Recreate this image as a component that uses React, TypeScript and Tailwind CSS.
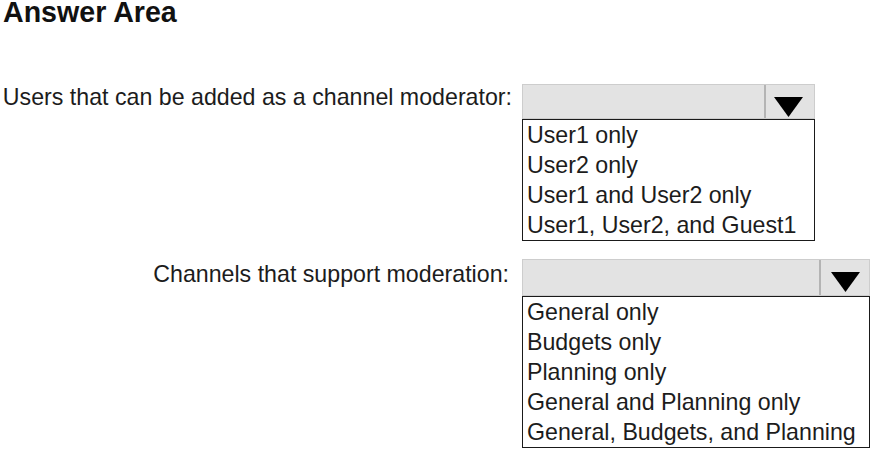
import React from "react";

function Triangle() {
  return (
    <svg width="29" height="20" viewBox="0 0 29 20" className="block">
      <polygon points="0,0 29,0 14.5,20" fill="#000" />
    </svg>
  );
}

function Dropdown({
  width,
  boxH,
  triLeft,
  options,
}: {
  width: string;
  boxH: string;
  triLeft: string;
  options: string[];
}) {
  return (
    <div className={`flex flex-col ${width}`}>
      <div className={`flex ${boxH} bg-[#e3e3e3] border border-[#cdcdcd]`}>
        <div className="flex-1" />
        <div className="w-[2px] bg-[#b4b4b4]" />
        <div className={`flex-1 max-w-[48px] pt-[12px] ${triLeft}`}>
          <Triangle />
        </div>
      </div>
      <div className="border border-[#1a1a1a] bg-white pl-[4px]">
        {options.map((o) => (
          <div key={o} className="leading-[30px] text-[23.2px] text-[#1c1c1c] whitespace-nowrap">
            {o}
          </div>
        ))}
      </div>
    </div>
  );
}

export default function App() {
  return (
    <div
      className="w-[872px] h-[449px] bg-white overflow-hidden"
      style={{ fontFamily: '"Liberation Sans", Arial, sans-serif' }}
    >
      <h1 className="text-[28.6px] font-bold leading-[28px] mt-[-2px] ml-[3px] text-[#111]">Answer Area</h1>
      <div className="grid grid-cols-[512px_auto] gap-x-[10px] mt-[58px]">
        <div className="text-right text-[23.2px] leading-[26px] text-[#1c1c1c] whitespace-nowrap">
          Users that can be added as a channel moderator:
        </div>
        <Dropdown
          width="w-[293px]"
          boxH="h-[35px]"
          triLeft="pl-[8px]"
          options={["User1 only", "User2 only", "User1 and User2 only", "User1, User2, and Guest1"]}
        />
      </div>
      <div className="grid grid-cols-[512px_auto] gap-x-[10px] mt-[18px]">
        <div className="text-right text-[23.2px] leading-[30px] pr-[3px] text-[#1c1c1c] whitespace-nowrap">
          Channels that support moderation:
        </div>
        <Dropdown
          width="w-[348px]"
          boxH="h-[37px]"
          triLeft="pl-[10px]"
          options={[
            "General only",
            "Budgets only",
            "Planning only",
            "General and Planning only",
            "General, Budgets, and Planning",
          ]}
        />
      </div>
    </div>
  );
}
